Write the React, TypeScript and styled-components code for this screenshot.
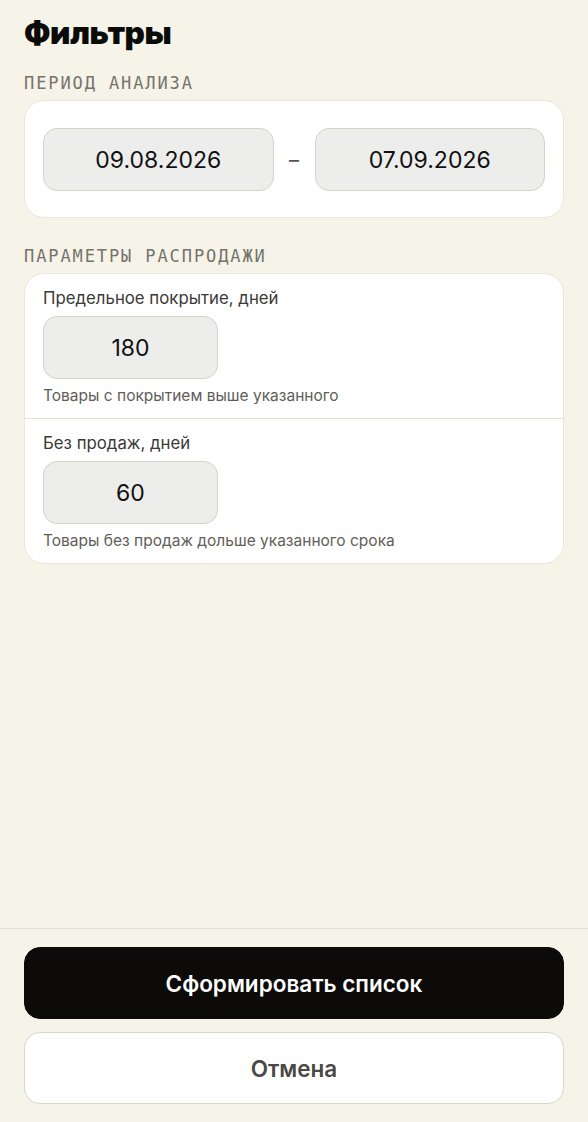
import React from "react";
import styled, { createGlobalStyle } from "styled-components";

const Global = createGlobalStyle`
  html, body { margin: 0; padding: 0; background: #f6f3e9; }
  body { font-family: Inter, "Noto Sans", sans-serif; color: #111; }
  * { box-sizing: border-box; }
`;

const Page = styled.div`
  height: 1122px;
  display: flex;
  flex-direction: column;
  background: #f6f3e9;
`;

const Content = styled.div`
  flex: 1;
  padding: 14px 24px 0;
  display: flex;
  flex-direction: column;
`;

const Title = styled.h1`
  margin: 0;
  font-size: 31.5px;
  line-height: 38px;
  font-weight: 900;
  letter-spacing: -0.4px;
  color: #0b0b0a;
`;

const SectionLabel = styled.div<{ $top: number }>`
  margin-top: ${(p) => p.$top}px;
  font-family: "DejaVu Sans Mono", "Liberation Mono", monospace;
  font-size: 17px;
  line-height: 20px;
  letter-spacing: 1.9px;
  color: #75746c;
  text-transform: uppercase;
`;

const Card = styled.div`
  margin-top: 7px;
  background: #ffffff;
  border: 1px solid #e9e5d7;
  border-radius: 20px;
`;

const RangeRow = styled.div`
  display: flex;
  align-items: center;
  gap: 12px;
  padding: 27px 18px 26px;
`;

const Field = styled.div<{ $w?: number }>`
  ${(p) => (p.$w ? `width: ${p.$w}px;` : "flex: 1;")}
  height: 63px;
  display: flex;
  align-items: center;
  justify-content: center;
  background: #ededeb;
  border: 1px solid #d5d2c6;
  border-radius: 14px;
  font-size: 23px;
  color: #111;
`;

const Dash = styled.span`
  font-size: 20px;
  color: #55544f;
  width: 17px;
  text-align: center;
`;

const ParamRow = styled.div<{ $divider?: boolean }>`
  display: flex;
  flex-direction: column;
  align-items: flex-start;
  padding: 14px 18px 13px;
  ${(p) => (p.$divider ? "border-top: 1px solid #e6e2d6;" : "")}
`;

const ParamLabel = styled.div`
  font-size: 16.8px;
  line-height: 20px;
  color: #3b3a36;
  margin-bottom: 8px;
`;

const Helper = styled.div`
  margin-top: 8px;
  font-size: 15.5px;
  line-height: 18px;
  color: #5f5e58;
`;

const Footer = styled.div`
  border-top: 1px solid #e4e0d3;
  padding: 18px 24px 18px;
  display: flex;
  flex-direction: column;
  gap: 13px;
`;

const Button = styled.button<{ $primary?: boolean }>`
  height: 72px;
  width: 100%;
  border-radius: 16px;
  font-family: Inter, "Noto Sans", sans-serif;
  font-size: 22.5px;
  font-weight: 600;
  cursor: pointer;
  background: ${(p) => (p.$primary ? "#0c0b0a" : "#ffffff")};
  color: ${(p) => (p.$primary ? "#ffffff" : "#4a4945")};
  border: 1px solid ${(p) => (p.$primary ? "#0c0b0a" : "#d9d6ca")};
`;

export default function App() {
  return (
    <Page>
      <Global />
      <Content>
        <Title>Фильтры</Title>
        <SectionLabel $top={21}>Период анализа</SectionLabel>
        <Card>
          <RangeRow>
            <Field>09.08.2026</Field>
            <Dash>–</Dash>
            <Field>07.09.2026</Field>
          </RangeRow>
        </Card>
        <SectionLabel $top={28}>Параметры распродажи</SectionLabel>
        <Card>
          <ParamRow>
            <ParamLabel>Предельное покрытие, дней</ParamLabel>
            <Field $w={175}>180</Field>
            <Helper>Товары с покрытием выше указанного</Helper>
          </ParamRow>
          <ParamRow $divider>
            <ParamLabel>Без продаж, дней</ParamLabel>
            <Field $w={175}>60</Field>
            <Helper>Товары без продаж дольше указанного срока</Helper>
          </ParamRow>
        </Card>
      </Content>
      <Footer>
        <Button $primary>Сформировать список</Button>
        <Button>Отмена</Button>
      </Footer>
    </Page>
  );
}
